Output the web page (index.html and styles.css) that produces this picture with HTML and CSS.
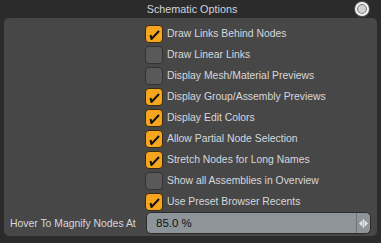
FILE: index.html
```html
<!DOCTYPE html>
<html lang="en">

<head>
    <meta charset="UTF-8">
    <title>Schematic Options</title>
    <link rel="stylesheet" href="styles.css">
</head>

<body>
    <div class="win">
        <header>
            <span class="title">Schematic Options</span>
            <span class="dot"></span>
        </header>
        <div class="panel">
            <div class="row"><span class="cb on"></span>Draw Links Behind Nodes</div>
            <div class="row"><span class="cb"></span>Draw Linear Links</div>
            <div class="row"><span class="cb"></span>Display Mesh/Material Previews</div>
            <div class="row"><span class="cb on"></span>Display Group/Assembly Previews</div>
            <div class="row"><span class="cb on"></span>Display Edit Colors</div>
            <div class="row"><span class="cb on"></span>Allow Partial Node Selection</div>
            <div class="row"><span class="cb on"></span>Stretch Nodes for Long Names</div>
            <div class="row"><span class="cb"></span>Show all Assemblies in Overview</div>
            <div class="row"><span class="cb on"></span>Use Preset Browser Recents</div>
            <div class="field">
                <label>Hover To Magnify Nodes At</label>
                <div class="input">
                    <span class="val">85.0 %</span>
                    <span class="spin">
                        <svg width="9" height="9" viewBox="0 0 9 9">
                            <path d="M3.5 1 L0 4.5 L3.5 8 Z" fill="#e0e4e6" />
                            <path d="M5.5 1 L9 4.5 L5.5 8 Z" fill="#e0e4e6" />
                            <rect x="4" y="0" width="1" height="9" fill="#e0e4e6" />
                        </svg>
                    </span>
                </div>
            </div>
        </div>
    </div>
</body>

</html>
```

FILE: styles.css
```css
* {
    margin: 0;
    padding: 0;
    box-sizing: border-box;
}

body,
html {
    width: 381px;
    height: 243px;
    background-color: #2b2b2b;
    font-family: "Liberation Sans", Arial, sans-serif;
    font-size: 10.4px;
    overflow: hidden;
}

.win {
    display: flex;
    flex-direction: column;
    height: 100%;
    padding: 0 4px 7px 4px;
}

header {
    flex: 0 0 18px;
    display: flex;
    align-items: center;
    justify-content: center;
    position: relative;
    color: #cfd3dc;
    font-size: 10.8px;
}

.title {
    margin-left: 3px;
}

.dot {
    position: absolute;
    right: 8px;
    top: 2px;
    width: 14px;
    height: 14px;
    border-radius: 50%;
    background: #d0d0d0;
    border: 2px solid #f4f4f4;
    box-shadow: inset 0 0 0 1px #6a6a6a, 0 0 0 1px #555;
}

.panel {
    flex: 1;
    background-color: #474747;
    border-radius: 5px;
    padding: 5px 0 0 0;
    display: flex;
    flex-direction: column;
}

.row {
    height: 21px;
    display: flex;
    align-items: center;
    padding-left: 141px;
    color: #d6d8dc;
}

.cb {
    width: 18px;
    height: 18px;
    border-radius: 4px;
    border: 1px solid #333;
    background-color: #595959;
    margin-right: 4px;
    flex: none;
    position: relative;
}

.cb.on {
    background-color: #f6a51f;
    border-color: #3a2a10;
}

.cb.on::after {
    content: "";
    position: absolute;
    left: 3px;
    top: 3px;
    width: 11px;
    height: 11px;
    background: url("data:image/svg+xml;utf8,<svg xmlns='http://www.w3.org/2000/svg' width='11' height='11' viewBox='0 0 11 11'><path d='M1.5 6 L2.5 10 L10 2' fill='none' stroke='%23111' stroke-width='2'/></svg>") no-repeat;
}

.field {
    display: flex;
    align-items: center;
    margin-top: 0;
    padding-left: 6px;
}

.field label {
    color: #d6d8dc;
    width: 136px;
}

.input {
    flex: 0 0 225px;
    height: 22px;
    background-color: #8d959b;
    border: 1px solid #2c2c2c;
    border-radius: 5px;
    display: flex;
    align-items: center;
}

.val {
    flex: 1;
    padding-left: 9px;
    color: #111;
    font-size: 11.5px;
}

.spin {
    width: 14px;
    height: 100%;
    border-left: 1px solid #6c7378;
    display: flex;
    align-items: center;
    justify-content: center;
}
```
